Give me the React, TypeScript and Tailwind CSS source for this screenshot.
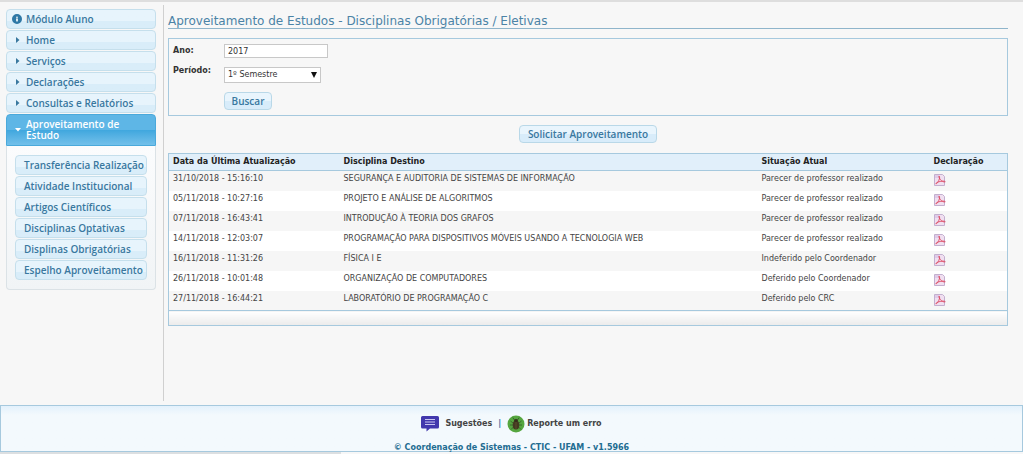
import { Info } from "lucide-react";

const menuItems = ["Home", "Serviços", "Declarações", "Consultas e Relatórios"];

const subMenuItems = [
  "Transferência Realização",
  "Atividade Institucional",
  "Artigos Científicos",
  "Disciplinas Optativas",
  "Displinas Obrigatórias",
  "Espelho Aproveitamento",
];

const requests = [
  { date: "31/10/2018 - 15:16:10", course: "SEGURANÇA E AUDITORIA DE SISTEMAS DE INFORMAÇÃO", status: "Parecer de professor realizado" },
  { date: "05/11/2018 - 10:27:16", course: "PROJETO E ANÁLISE DE ALGORITMOS", status: "Parecer de professor realizado" },
  { date: "07/11/2018 - 16:43:41", course: "INTRODUÇÃO À TEORIA DOS GRAFOS", status: "Parecer de professor realizado" },
  { date: "14/11/2018 - 12:03:07", course: "PROGRAMAÇÃO PARA DISPOSITIVOS MÓVEIS USANDO A TECNOLOGIA WEB", status: "Parecer de professor realizado" },
  { date: "16/11/2018 - 11:31:26", course: "FÍSICA I E", status: "Indeferido pelo Coordenador" },
  { date: "26/11/2018 - 10:01:48", course: "ORGANIZAÇÃO DE COMPUTADORES", status: "Deferido pelo Coordenador" },
  { date: "27/11/2018 - 16:44:21", course: "LABORATÓRIO DE PROGRAMAÇÃO C", status: "Deferido pelo CRC" },
];

const buttonLook =
  "border border-[#b9d8e8] rounded bg-linear-to-b from-[#e9f5fd] from-50% to-[#d8ecfa] to-50% font-['Open_Sans',sans-serif] font-semibold text-[10px] leading-3 text-[#39789f]";

const menuLink =
  "flex h-5 items-center whitespace-nowrap border border-[#c5dfec] rounded bg-linear-to-b from-[#e7f4fc] from-60% to-[#d9edf9] to-60%";

function PdfIcon() {
  return (
    <svg viewBox="0 0 12 12" className="size-3" aria-hidden="true">
      <path d="M.5.5h8l2 2v9H.5z" fill="#f0dff0" stroke="#c3b0cf" />
      <path d="M1 1h4v3H1z" fill="#dfcbe8" />
      <path
        d="M5 2c1 0 .6 2.800-.2 4.400C4 8.200 2.700 10 1.900 9.900c-.7-.3 1.300-1.700 3.200-2.200 2-.6 5.800-.9 6.100-.1.200.8-2.500.3-4.100-1.200C5.600 5 4.400 2.300 5 2z"
        fill="none"
        stroke="#dc4a62"
        strokeWidth=".9"
      />
    </svg>
  );
}

function ChatIcon() {
  return (
    <svg viewBox="0 0 18 16" className="w-[18px] h-4" aria-hidden="true">
      <path d="M1.500 0h15A1.500 1.500 0 0 1 18 1.500v9.500a1.500 1.500 0 0 1-1.500 1.500H9l-3.500 3V12.500h-4A1.500 1.500 0 0 1 0 11V1.500A1.500 1.500 0 0 1 1.500 0z" fill="#4238ad" />
      <path d="M4 3.500h10M4 6h10M4 8.500h10" stroke="#c9c5f0" strokeWidth="1" />
    </svg>
  );
}

function BugIcon() {
  return (
    <svg viewBox="0 0 18 18" className="size-[18px]" aria-hidden="true">
      <circle cx="9" cy="9" r="8.500" fill="#55a63f" />
      <path
        d="M7.500 5 5.800 2.500M10.500 5l1.700-2.500M6 8 3.500 6M6 10H3M6.500 12 4 14.500M12 8l2.500-2M12 10h3M11.500 12l2.500 2.500"
        fill="none"
        stroke="#34592a"
        strokeWidth=".8"
      />
      <ellipse cx="9" cy="10" rx="3.300" ry="4.600" fill="#433a20" />
      <ellipse cx="9" cy="5.500" rx="2" ry="1.500" fill="#352e1b" />
      <path d="M9 7v7" stroke="#6a5c35" strokeWidth=".6" />
    </svg>
  );
}

function Sidebar() {
  return (
    <aside className="w-[164px] shrink-0 border-r border-[#d0d0d0] pt-1 pl-[6px] pr-[7px] font-['Open_Sans',sans-serif] text-[10px] leading-[11px] font-semibold text-[#39789f]">
      <nav className="flex flex-col gap-px">
        <a href="#modulo" className={menuLink}>
          <Info className="ml-[5px] mr-1 size-[10px] fill-[#2f78a6] text-[#2f78a6] [&>path]:stroke-white" strokeWidth={4} />
          Módulo Aluno
        </a>
        {menuItems.map((item) => (
          <a key={item} href="#menu" className={menuLink}>
            <svg viewBox="0 0 4 6" className="ml-[9px] mr-[6px] h-[6px] w-1" aria-hidden="true">
              <path d="M0 0l3.500 3L0 6z" fill="#39789f" />
            </svg>
            {item}
          </a>
        ))}

        {/* Open section */}
        <div>
          <a
            href="#aproveitamento"
            className="flex h-8 items-center border border-[#4aa9db] rounded-t bg-linear-to-b from-[#5eb6e6] from-50% via-[#3fa7de] via-50% to-[#72c0ea] text-white"
          >
            <svg viewBox="0 0 6 4" className="ml-2 mr-[5px] h-1 w-[6px]" aria-hidden="true">
              <path d="M0 0h6L3 3.500z" fill="#fff" />
            </svg>
            <span className="w-28">Aproveitamento de Estudo</span>
          </a>
          <ul className="flex flex-col gap-px rounded-b border border-t-0 border-[#dbe2e6] bg-linear-to-b from-[#fbfcfd] to-[#f1f4f6] px-2 pt-[9px] pb-[9px]">
            {subMenuItems.map((item) => (
              <li key={item}>
                <a href="#submenu" className={`${menuLink} pl-2`}>
                  {item}
                </a>
              </li>
            ))}
          </ul>
        </div>
      </nav>
    </aside>
  );
}

function SearchForm() {
  return (
    <form className="mt-[9px] grid grid-cols-[51px_auto] justify-start border border-[#a6c9de] px-1 py-[5px] text-[#333]">
      <label htmlFor="ano" className="h-5 pt-px font-bold leading-[11px]">Ano:</label>
      <input
        id="ano"
        defaultValue="2017"
        className="h-[14px] w-[104px] border border-[#c8c8c8] bg-white px-[3px]"
      />
      <label htmlFor="periodo" className="h-7 pt-px font-bold leading-[11px]">Período:</label>
      <div className="relative w-[97px] pt-[3px]">
        <select
          id="periodo"
          className="h-4 w-full appearance-none border border-[#c8c8c8] bg-white px-[3px]"
        >
          <option>1º Semestre</option>
        </select>
        <svg viewBox="0 0 6 6" className="pointer-events-none absolute right-1 top-2 size-[6px]" aria-hidden="true">
          <path d="M0 0h6L3 6z" fill="#111" />
        </svg>
      </div>
      <button type="button" className={`${buttonLook} col-start-2 h-[18px] w-12`}>
        Buscar
      </button>
    </form>
  );
}

function RequestsTable() {
  return (
    <table className="mt-[10px] w-full table-fixed border-collapse border border-[#a6c9de] text-left leading-3">
      <colgroup>
        <col className="w-[171px]" />
        <col />
        <col className="w-[172px]" />
        <col className="w-[78px]" />
      </colgroup>
      <thead>
        <tr className="h-[17px] border-b border-[#a6c9de] bg-[#e1effa] text-[#222]">
          <th className="pl-1">Data da Última Atualização</th>
          <th className="pl-1">Disciplina Destino</th>
          <th className="pl-1">Situação Atual</th>
          <th className="pl-1">Declaração</th>
        </tr>
      </thead>
      <tbody>
        {requests.map((request) => (
          <tr key={request.date} className="h-5 align-top odd:bg-[#f6f6f6] even:bg-white">
            <td className="pl-1 pt-[2px]">{request.date}</td>
            <td className="pl-1 pt-[2px]">{request.course}</td>
            <td className="pl-1 pt-[2px]">{request.status}</td>
            <td className="pl-1 pt-[3px]">
              <a href="#pdf" aria-label="Declaração" className="block size-3">
                <PdfIcon />
              </a>
            </td>
          </tr>
        ))}
      </tbody>
      <tfoot>
        <tr className="h-[15px] border-t border-[#a6c9de]">
          <td colSpan={4} className="bg-linear-to-b from-white to-[#ebebeb]" />
        </tr>
      </tfoot>
    </table>
  );
}

export default function App() {
  return (
    <div className="flex min-h-screen flex-col border-t-2 border-[#dedede] bg-[#f7f7f7] font-['DejaVu_Sans',sans-serif] text-[8px] text-[#444]">
      <div className="flex flex-1 pt-[3px] pb-1">
        <Sidebar />
        <main className="min-w-0 flex-1 pl-1 pr-[15px]">
          <h1 className="h-6 border-b border-[#8fb5cb] pt-2 text-[12px] leading-4 text-[#4b83a6]">
            Aproveitamento de Estudos - Disciplinas Obrigatórias / Eletivas
          </h1>
          <SearchForm />
          <div className="mt-[9px] flex justify-center">
            <button type="button" className={`${buttonLook} h-[18px] px-2`}>
              Solicitar Aproveitamento
            </button>
          </div>
          <RequestsTable />
        </main>
      </div>

      <footer className="h-[47px] border border-[#a6c9de] bg-linear-to-b from-[#e3f1fc] to-[#f3f9fd] to-20% font-bold">
        <div className="flex h-9 items-center justify-center">
          <a href="#sugestoes" className="flex items-center gap-[6px]">
            <ChatIcon />
            Sugestões
          </a>
          <span className="mx-[6px] text-[#2e6e9e]">|</span>
          <a href="#erro" className="flex items-center gap-[2px]">
            <BugIcon />
            Reporte um erro
          </a>
        </div>
        <p className="text-center leading-[11px] text-[#226c91]">© Coordenação de Sistemas - CTIC - UFAM - v1.5966</p>
      </footer>
      <div className="h-[2px] w-1/3 bg-[#dcdfe1]" />
    </div>
  );
}
